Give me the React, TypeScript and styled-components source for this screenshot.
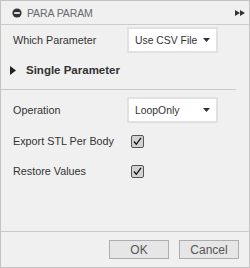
import React from "react";
import styled, { createGlobalStyle } from "styled-components";

const Global = createGlobalStyle`
  html, body { margin: 0; padding: 0; background: #f0f0f0; }
  * { box-sizing: border-box; }
`;

const Panel = styled.div`
  width: 250px;
  height: 268px;
  border: 1px solid #c3c3c3;
  background: #f0f0f0;
  display: flex;
  flex-direction: column;
  font-family: "Liberation Sans", Arial, sans-serif;
  color: #333;
`;

const Header = styled.div`
  height: 24px;
  flex: none;
  border-bottom: 1px solid #cbcbcb;
  display: flex;
  align-items: center;
  padding: 0 4px 0 11px;
  gap: 5px;
`;

const Title = styled.span`
  font-size: 10.5px;
  color: #666a70;
  flex: 1;
  letter-spacing: -0.1px;
`;

const Body = styled.div`
  flex: 1;
  display: flex;
  flex-direction: column;
`;

const Row = styled.div<{ $top?: number }>`
  height: 30px;
  margin-top: ${(p) => p.$top ?? 0}px;
  display: grid;
  grid-template-columns: 114px auto;
  align-items: center;
  padding-left: 12px;
  font-size: 10.8px;
`;

const Section = styled.div`
  height: 30px;
  display: flex;
  align-items: center;
  padding-left: 9px;
  gap: 10px;
  font-size: 11.5px;
  font-weight: bold;
  color: #333;
`;

const Divider = styled.div`
  height: 1px;
  background: #c8c8c8;
  margin: 4px 13px 0 0;
`;

const Select = styled.div`
  width: 91px;
  height: 26px;
  background: #fff;
  border: 2px solid #e1e1e1;
  display: flex;
  align-items: center;
  justify-content: space-between;
  padding: 0 6px 0 6px;
  font-size: 10.4px;
  color: #333;
  white-space: nowrap;
`;

const Check = styled.div`
  width: 13px;
  height: 13px;
  margin-left: 4px;
  border: 1px solid #555;
  border-radius: 2px;
  background: #d2d2d2;
  display: flex;
  align-items: center;
  justify-content: center;
`;

const Footer = styled.div`
  height: 36px;
  flex: none;
  border-top: 1px solid #c8c8c8;
  display: flex;
  justify-content: flex-end;
  align-items: flex-start;
  padding: 8px 10px 0 0;
  gap: 10px;
`;

const Button = styled.button`
  width: 60px;
  height: 19px;
  background: #e6e6e6;
  border: 1px solid #adadad;
  font-family: "Liberation Sans", Arial, sans-serif;
  font-size: 12px;
  color: #555;
  padding: 0;
  display: flex;
  align-items: center;
  justify-content: center;
`;

const Arrow = () => (
  <svg width="7" height="4" viewBox="0 0 7 4">
    <path d="M0 0H7L3.5 4Z" fill="#333" />
  </svg>
);

const CheckMark = () => (
  <svg width="11" height="11" viewBox="0 0 11 11">
    <path d="M2 5.5L4.3 8.3L9 1.8" stroke="#111" strokeWidth="1.3" fill="none" />
  </svg>
);

export default function App() {
  return (
    <>
      <Global />
      <Panel>
        <Header>
          <svg width="10" height="10" viewBox="0 0 10 10">
            <circle cx="5" cy="5" r="4.6" fill="#333" />
            <rect x="2.2" y="4.2" width="5.6" height="1.6" fill="#fff" />
          </svg>
          <Title>PARA PARAM</Title>
          <svg width="10" height="6" viewBox="0 0 10 6">
            <path d="M0 0L5 3L0 6Z M5 0L10 3L5 6Z" fill="#333" />
          </svg>
        </Header>
        <Body>
          <Row>
            <span>Which Parameter</span>
            <Select>
              <span>Use CSV File</span>
              <Arrow />
            </Select>
          </Row>
          <Section>
            <svg width="6" height="9" viewBox="0 0 6 9">
              <path d="M0 0L6 4.5L0 9Z" fill="#222" />
            </svg>
            <span>Single Parameter</span>
          </Section>
          <Divider />
          <Row $top={5}>
            <span>Operation</span>
            <Select>
              <span>LoopOnly</span>
              <Arrow />
            </Select>
          </Row>
          <Row $top={1}>
            <span>Export STL Per Body</span>
            <Check>
              <CheckMark />
            </Check>
          </Row>
          <Row>
            <span>Restore Values</span>
            <Check>
              <CheckMark />
            </Check>
          </Row>
        </Body>
        <Footer>
          <Button>OK</Button>
          <Button>Cancel</Button>
        </Footer>
      </Panel>
    </>
  );
}
